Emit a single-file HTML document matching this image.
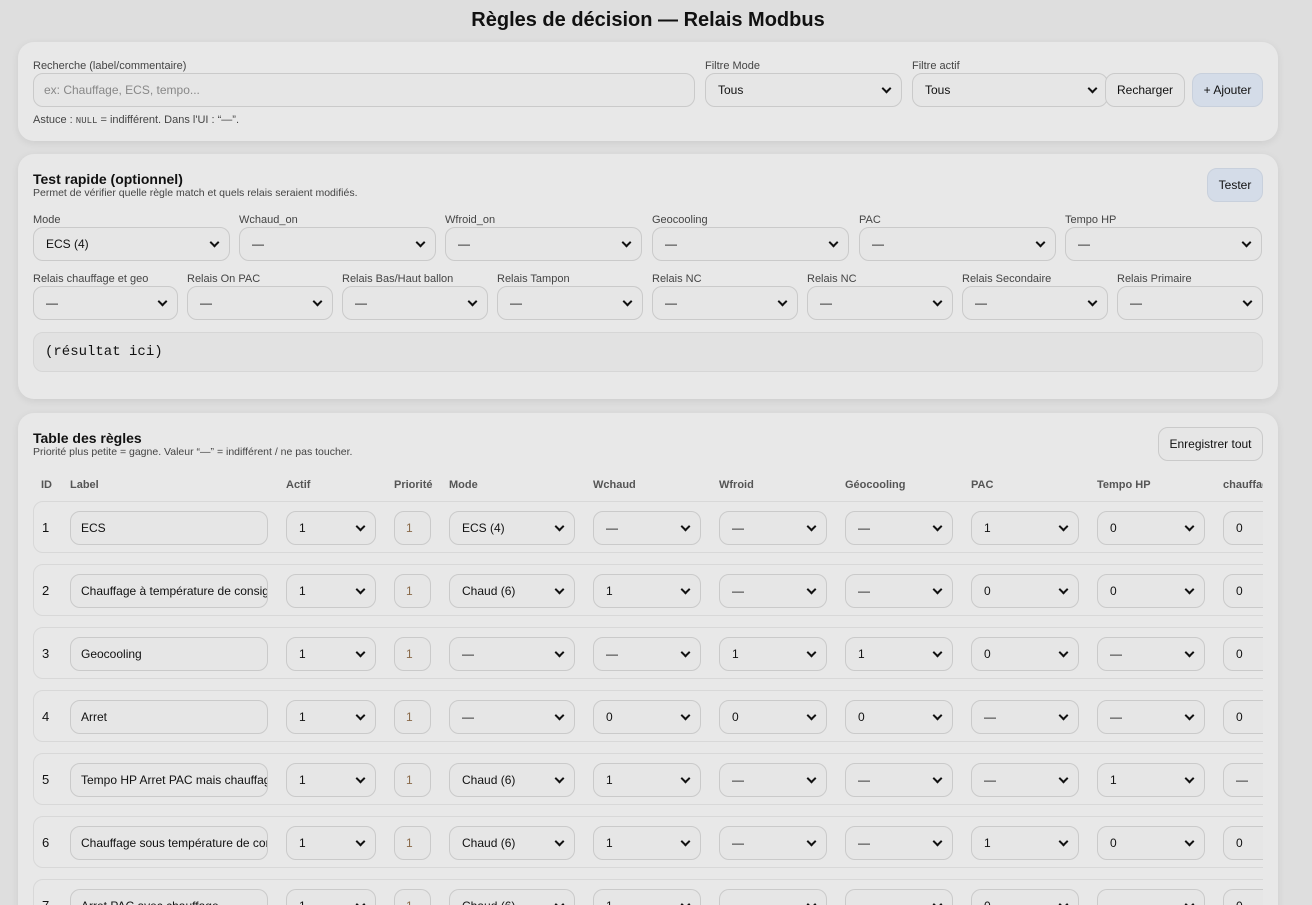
<!DOCTYPE html>
<html style="width:1312px;height:905px;overflow:hidden"><head><meta charset="utf-8">
<style>
*{box-sizing:border-box;margin:0;padding:0}
body{width:1312px;height:905px;overflow:hidden;background:#dedede;font-family:"Liberation Sans",Arial,sans-serif;color:#111;position:relative}
.a{position:absolute}
h1{position:absolute;left:0;width:1296px;top:9px;text-align:center;font-size:20px;font-weight:bold}
.card{position:absolute;left:18px;width:1260px;background:#e8e8e8;border-radius:16px;box-shadow:0 2px 8px rgba(0,0,0,0.08)}
.lbl{position:absolute;font-size:11px;color:#444}
.in,.s{position:absolute;height:34px;border:1px solid #cacaca;border-radius:10px;background:#e6e6e6;font-size:12px;line-height:32px;padding-left:10px;white-space:nowrap;overflow:hidden;color:#111}
.s{padding-left:12px}
.s::after{content:"";position:absolute;right:11px;top:11px;width:5px;height:5px;border-right:2.5px solid #111;border-bottom:2.5px solid #111;transform:rotate(45deg)}
.btn{position:absolute;height:34px;border:1px solid #cacaca;border-radius:10px;background:#e6e6e6;font-size:12px;line-height:32px;text-align:center;color:#111}
.blue{background:#d4dce8;border-color:#c8d0dc}
.t{position:absolute;font-size:14px;font-weight:bold}
.sub{position:absolute;font-size:10.5px;color:#444}
.th{position:absolute;top:479px;font-size:11px;font-weight:bold;color:#555}
.row{position:absolute;left:33px;width:1250px;height:52px;border:1px solid #d8d8d8;border-radius:10px}
.clip{position:absolute;left:0;top:0;width:1263px;height:905px;overflow:hidden}
.id{position:absolute;left:42px;font-size:13px;margin-top:1px}
.p{color:#8a6a4a;padding-left:11px}
</style></head><body>
<h1>Règles de décision — Relais Modbus</h1>

<div class="card" style="top:42px;height:99px"></div>
<div class="lbl" style="left:33px;top:60px">Recherche (label/commentaire)</div>
<div class="in" style="left:33px;top:73px;width:662px;color:#888">ex: Chauffage, ECS, tempo...</div>
<div class="lbl" style="left:33px;top:114px;color:#444">Astuce : <span style="font-family:'Liberation Mono',monospace;font-size:9px">NULL</span> = indifférent. Dans l'UI : “—”.</div>
<div class="lbl" style="left:705px;top:60px">Filtre Mode</div>
<div class="s" style="left:705px;top:73px;width:197px">Tous</div>
<div class="lbl" style="left:912px;top:60px">Filtre actif</div>
<div class="s" style="left:912px;top:73px;width:196px">Tous</div>
<div class="btn" style="left:1105px;top:73px;width:80px">Recharger</div>
<div class="btn blue" style="left:1192px;top:73px;width:71px">+ Ajouter</div>

<div class="card" style="top:154px;height:245px"></div>
<div class="t" style="left:33px;top:171px">Test rapide (optionnel)</div>
<div class="sub" style="left:33px;top:187px">Permet de vérifier quelle règle match et quels relais seraient modifiés.</div>
<div class="btn blue" style="left:1207px;top:168px;width:56px">Tester</div>
<div class="lbl" style="left:33px;top:214px">Mode</div><div class="s" style="left:33px;top:227px;width:197px">ECS (4)</div>
<div class="lbl" style="left:239px;top:214px">Wchaud_on</div><div class="s" style="left:239px;top:227px;width:197px">—</div>
<div class="lbl" style="left:445px;top:214px">Wfroid_on</div><div class="s" style="left:445px;top:227px;width:197px">—</div>
<div class="lbl" style="left:652px;top:214px">Geocooling</div><div class="s" style="left:652px;top:227px;width:197px">—</div>
<div class="lbl" style="left:859px;top:214px">PAC</div><div class="s" style="left:859px;top:227px;width:197px">—</div>
<div class="lbl" style="left:1065px;top:214px">Tempo HP</div><div class="s" style="left:1065px;top:227px;width:197px">—</div>

<div class="lbl" style="left:33px;top:273px">Relais chauffage et geo</div><div class="s" style="left:33px;top:286px;width:145px">—</div>
<div class="lbl" style="left:187px;top:273px">Relais On PAC</div><div class="s" style="left:187px;top:286px;width:146px">—</div>
<div class="lbl" style="left:342px;top:273px">Relais Bas/Haut ballon</div><div class="s" style="left:342px;top:286px;width:146px">—</div>
<div class="lbl" style="left:497px;top:273px">Relais Tampon</div><div class="s" style="left:497px;top:286px;width:146px">—</div>
<div class="lbl" style="left:652px;top:273px">Relais NC</div><div class="s" style="left:652px;top:286px;width:146px">—</div>
<div class="lbl" style="left:807px;top:273px">Relais NC</div><div class="s" style="left:807px;top:286px;width:146px">—</div>
<div class="lbl" style="left:962px;top:273px">Relais Secondaire</div><div class="s" style="left:962px;top:286px;width:146px">—</div>
<div class="lbl" style="left:1117px;top:273px">Relais Primaire</div><div class="s" style="left:1117px;top:286px;width:146px">—</div>
<div class="a" style="left:33px;top:332px;width:1230px;height:40px;border:1px solid #d6d6d6;border-radius:10px;background:#e2e2e2;font-family:'Liberation Mono',monospace;font-size:14px;line-height:38px;padding-left:11px">(résultat ici)</div>

<div class="card" style="top:413px;height:520px"></div>
<div class="t" style="left:33px;top:430px">Table des règles</div>
<div class="sub" style="left:33px;top:446px">Priorité plus petite = gagne. Valeur “—” = indifférent / ne pas toucher.</div>
<div class="btn" style="left:1158px;top:427px;width:105px">Enregistrer tout</div>

<div class="clip">
<div class="th" style="left:41px">ID</div>
<div class="th" style="left:70px">Label</div>
<div class="th" style="left:286px">Actif</div>
<div class="th" style="left:394px">Priorité</div>
<div class="th" style="left:449px">Mode</div>
<div class="th" style="left:593px">Wchaud</div>
<div class="th" style="left:719px">Wfroid</div>
<div class="th" style="left:845px">Géocooling</div>
<div class="th" style="left:971px">PAC</div>
<div class="th" style="left:1097px">Tempo HP</div>
<div class="th" style="left:1223px">chauffage</div>

<div class="row" style="top:501px"></div>
<div class="id" style="top:519px">1</div>
<div class="in" style="left:70px;top:511px;width:198px">ECS</div>
<div class="s" style="left:286px;top:511px;width:90px">1</div>
<div class="in p" style="left:394px;top:511px;width:37px">1</div>
<div class="s" style="left:449px;top:511px;width:126px">ECS (4)</div>
<div class="s" style="left:593px;top:511px;width:108px">—</div>
<div class="s" style="left:719px;top:511px;width:108px">—</div>
<div class="s" style="left:845px;top:511px;width:108px">—</div>
<div class="s" style="left:971px;top:511px;width:108px">1</div>
<div class="s" style="left:1097px;top:511px;width:108px">0</div>
<div class="s" style="left:1223px;top:511px;width:108px">0</div>

<div class="row" style="top:564px"></div>
<div class="id" style="top:582px">2</div>
<div class="in" style="left:70px;top:574px;width:198px">Chauffage à température de consigne</div>
<div class="s" style="left:286px;top:574px;width:90px">1</div>
<div class="in p" style="left:394px;top:574px;width:37px">1</div>
<div class="s" style="left:449px;top:574px;width:126px">Chaud (6)</div>
<div class="s" style="left:593px;top:574px;width:108px">1</div>
<div class="s" style="left:719px;top:574px;width:108px">—</div>
<div class="s" style="left:845px;top:574px;width:108px">—</div>
<div class="s" style="left:971px;top:574px;width:108px">0</div>
<div class="s" style="left:1097px;top:574px;width:108px">0</div>
<div class="s" style="left:1223px;top:574px;width:108px">0</div>

<div class="row" style="top:627px"></div>
<div class="id" style="top:645px">3</div>
<div class="in" style="left:70px;top:637px;width:198px">Geocooling</div>
<div class="s" style="left:286px;top:637px;width:90px">1</div>
<div class="in p" style="left:394px;top:637px;width:37px">1</div>
<div class="s" style="left:449px;top:637px;width:126px">—</div>
<div class="s" style="left:593px;top:637px;width:108px">—</div>
<div class="s" style="left:719px;top:637px;width:108px">1</div>
<div class="s" style="left:845px;top:637px;width:108px">1</div>
<div class="s" style="left:971px;top:637px;width:108px">0</div>
<div class="s" style="left:1097px;top:637px;width:108px">—</div>
<div class="s" style="left:1223px;top:637px;width:108px">0</div>

<div class="row" style="top:690px"></div>
<div class="id" style="top:708px">4</div>
<div class="in" style="left:70px;top:700px;width:198px">Arret</div>
<div class="s" style="left:286px;top:700px;width:90px">1</div>
<div class="in p" style="left:394px;top:700px;width:37px">1</div>
<div class="s" style="left:449px;top:700px;width:126px">—</div>
<div class="s" style="left:593px;top:700px;width:108px">0</div>
<div class="s" style="left:719px;top:700px;width:108px">0</div>
<div class="s" style="left:845px;top:700px;width:108px">0</div>
<div class="s" style="left:971px;top:700px;width:108px">—</div>
<div class="s" style="left:1097px;top:700px;width:108px">—</div>
<div class="s" style="left:1223px;top:700px;width:108px">0</div>

<div class="row" style="top:753px"></div>
<div class="id" style="top:771px">5</div>
<div class="in" style="left:70px;top:763px;width:198px">Tempo HP Arret PAC mais chauffage</div>
<div class="s" style="left:286px;top:763px;width:90px">1</div>
<div class="in p" style="left:394px;top:763px;width:37px">1</div>
<div class="s" style="left:449px;top:763px;width:126px">Chaud (6)</div>
<div class="s" style="left:593px;top:763px;width:108px">1</div>
<div class="s" style="left:719px;top:763px;width:108px">—</div>
<div class="s" style="left:845px;top:763px;width:108px">—</div>
<div class="s" style="left:971px;top:763px;width:108px">—</div>
<div class="s" style="left:1097px;top:763px;width:108px">1</div>
<div class="s" style="left:1223px;top:763px;width:108px">—</div>

<div class="row" style="top:816px"></div>
<div class="id" style="top:834px">6</div>
<div class="in" style="left:70px;top:826px;width:198px">Chauffage sous température de consigne</div>
<div class="s" style="left:286px;top:826px;width:90px">1</div>
<div class="in p" style="left:394px;top:826px;width:37px">1</div>
<div class="s" style="left:449px;top:826px;width:126px">Chaud (6)</div>
<div class="s" style="left:593px;top:826px;width:108px">1</div>
<div class="s" style="left:719px;top:826px;width:108px">—</div>
<div class="s" style="left:845px;top:826px;width:108px">—</div>
<div class="s" style="left:971px;top:826px;width:108px">1</div>
<div class="s" style="left:1097px;top:826px;width:108px">0</div>
<div class="s" style="left:1223px;top:826px;width:108px">0</div>

<div class="row" style="top:879px"></div>
<div class="id" style="top:897px">7</div>
<div class="in" style="left:70px;top:889px;width:198px">Arret PAC avec chauffage</div>
<div class="s" style="left:286px;top:889px;width:90px">1</div>
<div class="in p" style="left:394px;top:889px;width:37px">1</div>
<div class="s" style="left:449px;top:889px;width:126px">Chaud (6)</div>
<div class="s" style="left:593px;top:889px;width:108px">1</div>
<div class="s" style="left:719px;top:889px;width:108px">—</div>
<div class="s" style="left:845px;top:889px;width:108px">—</div>
<div class="s" style="left:971px;top:889px;width:108px">0</div>
<div class="s" style="left:1097px;top:889px;width:108px">—</div>
<div class="s" style="left:1223px;top:889px;width:108px">0</div>
</div>
</body></html>
